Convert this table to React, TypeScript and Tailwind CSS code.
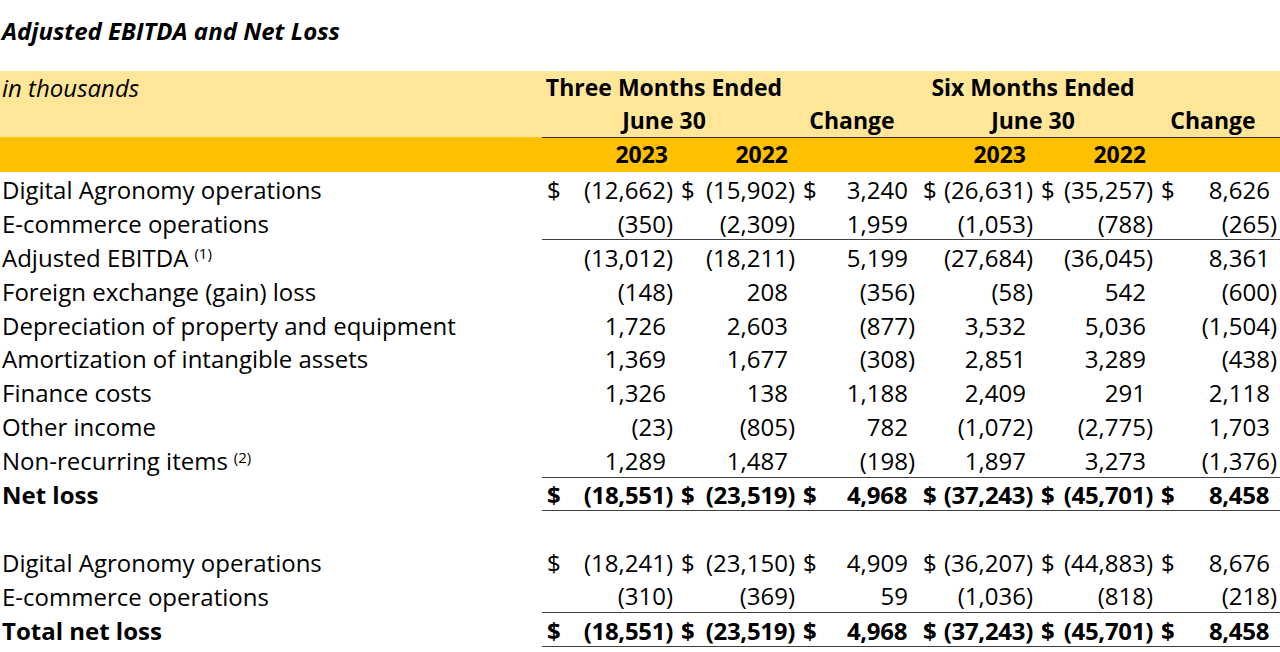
type Cell = { v: string; dollar?: boolean };

type Row = {
  label: string;
  sup?: string;
  bold?: boolean;
  line?: boolean;
  cells?: Cell[];
};

const c = (v: string, dollar = false): Cell => ({ v, dollar });

const rows: Row[] = [
  {
    label: "Digital Agronomy operations",
    cells: [c("(12,662)", true), c("(15,902)", true), c("3,240", true), c("(26,631)", true), c("(35,257)", true), c("8,626", true)],
  },
  {
    label: "E-commerce operations",
    line: true,
    cells: [c("(350)"), c("(2,309)"), c("1,959"), c("(1,053)"), c("(788)"), c("(265)")],
  },
  {
    label: "Adjusted EBITDA",
    sup: "(1)",
    cells: [c("(13,012)"), c("(18,211)"), c("5,199"), c("(27,684)"), c("(36,045)"), c("8,361")],
  },
  {
    label: "Foreign exchange (gain) loss",
    cells: [c("(148)"), c("208"), c("(356)"), c("(58)"), c("542"), c("(600)")],
  },
  {
    label: "Depreciation of property and equipment",
    cells: [c("1,726"), c("2,603"), c("(877)"), c("3,532"), c("5,036"), c("(1,504)")],
  },
  {
    label: "Amortization of intangible assets",
    cells: [c("1,369"), c("1,677"), c("(308)"), c("2,851"), c("3,289"), c("(438)")],
  },
  {
    label: "Finance costs",
    cells: [c("1,326"), c("138"), c("1,188"), c("2,409"), c("291"), c("2,118")],
  },
  {
    label: "Other income",
    cells: [c("(23)"), c("(805)"), c("782"), c("(1,072)"), c("(2,775)"), c("1,703")],
  },
  {
    label: "Non-recurring items",
    sup: "(2)",
    line: true,
    cells: [c("1,289"), c("1,487"), c("(198)"), c("1,897"), c("3,273"), c("(1,376)")],
  },
  {
    label: "Net loss",
    bold: true,
    line: true,
    cells: [c("(18,551)", true), c("(23,519)", true), c("4,968", true), c("(37,243)", true), c("(45,701)", true), c("8,458", true)],
  },
  { label: "" },
  {
    label: "Digital Agronomy operations",
    cells: [c("(18,241)", true), c("(23,150)", true), c("4,909", true), c("(36,207)", true), c("(44,883)", true), c("8,676", true)],
  },
  {
    label: "E-commerce operations",
    line: true,
    cells: [c("(310)"), c("(369)"), c("59"), c("(1,036)"), c("(818)"), c("(218)")],
  },
  {
    label: "Total net loss",
    bold: true,
    line: true,
    cells: [c("(18,551)", true), c("(23,519)", true), c("4,968", true), c("(37,243)", true), c("(45,701)", true), c("8,458", true)],
  },
];

const colWidths = ["w-[542px]", "w-[134px]", "w-[122px]", "w-[120px]", "w-[118px]", "w-[120px]", "w-[124px]"];

function Amount({ cell, bold }: { cell: Cell; bold?: boolean }) {
  const neg = cell.v.startsWith("(");
  return (
    <div className={`flex items-center justify-between pl-[5px] pr-[3px] ${bold ? "font-bold tracking-[-0.3px]" : ""}`}>
      <span>{cell.dollar ? "$" : ""}</span>
      <span>
        {cell.v}
        {!neg && <span className="invisible">)</span>}
      </span>
    </div>
  );
}

export default function App() {
  return (
    <div className="h-[652px] w-[1280px] overflow-hidden bg-white font-['Open_Sans',sans-serif] text-[24px] text-black">
      <div className="h-[71px] pl-[2px] pt-[14px] text-[24px] font-bold italic leading-[33px]">Adjusted EBITDA and Net Loss</div>

      <table className="w-[1280px] table-fixed border-collapse">
        <colgroup>
          {colWidths.map((w, i) => (
            <col key={i} className={w} />
          ))}
        </colgroup>
        <thead className="text-[23px] font-bold leading-none">
          <tr className="h-[33px] bg-[#ffe699]">
            <td className="pl-[2px] align-top text-[24px] font-normal italic leading-[33px]">in thousands</td>
            <td colSpan={2} className="pr-[12px] text-center">Three Months Ended</td>
            <td />
            <td colSpan={2} className="pr-[8px] text-center">Six Months Ended</td>
            <td />
          </tr>
          <tr className="h-[33px] bg-[#ffe699]">
            <td />
            <td colSpan={2} className="border-b border-[#333] pr-[12px] text-center">June 30</td>
            <td className="border-b border-[#333] pr-[12px] text-center">Change</td>
            <td colSpan={2} className="border-b border-[#333] pr-[8px] text-center">June 30</td>
            <td className="border-b border-[#333] pr-[10px] text-center">Change</td>
          </tr>
          <tr className="h-[35px] bg-[#ffc000]">
            <td />
            <td className="pr-[8px] text-right">2023</td>
            <td className="pr-[10px] text-right">2022</td>
            <td />
            <td className="pr-[10px] text-right">2023</td>
            <td className="pr-[10px] text-right">2022</td>
            <td />
          </tr>
        </thead>
        <tbody>
          {rows.map((r, i) => (
            <tr key={i} className="h-[33.9px]">
              <td className={`whitespace-nowrap pl-[2px] pt-[2px] leading-none ${r.bold ? "font-bold" : ""}`}>
                {r.label}
                {r.sup && <sup className="ml-[6px] text-[15px]">{r.sup}</sup>}
              </td>
              {r.cells
                ? r.cells.map((cell, j) => (
                    <td key={j} className={`p-0 pt-[2px] leading-none ${r.line ? "border-b-[1.5px] border-[#404040]" : ""}`}>
                      <Amount cell={cell} bold={r.bold} />
                    </td>
                  ))
                : Array.from({ length: 6 }).map((_, j) => <td key={j} />)}
            </tr>
          ))}
        </tbody>
      </table>
    </div>
  );
}
